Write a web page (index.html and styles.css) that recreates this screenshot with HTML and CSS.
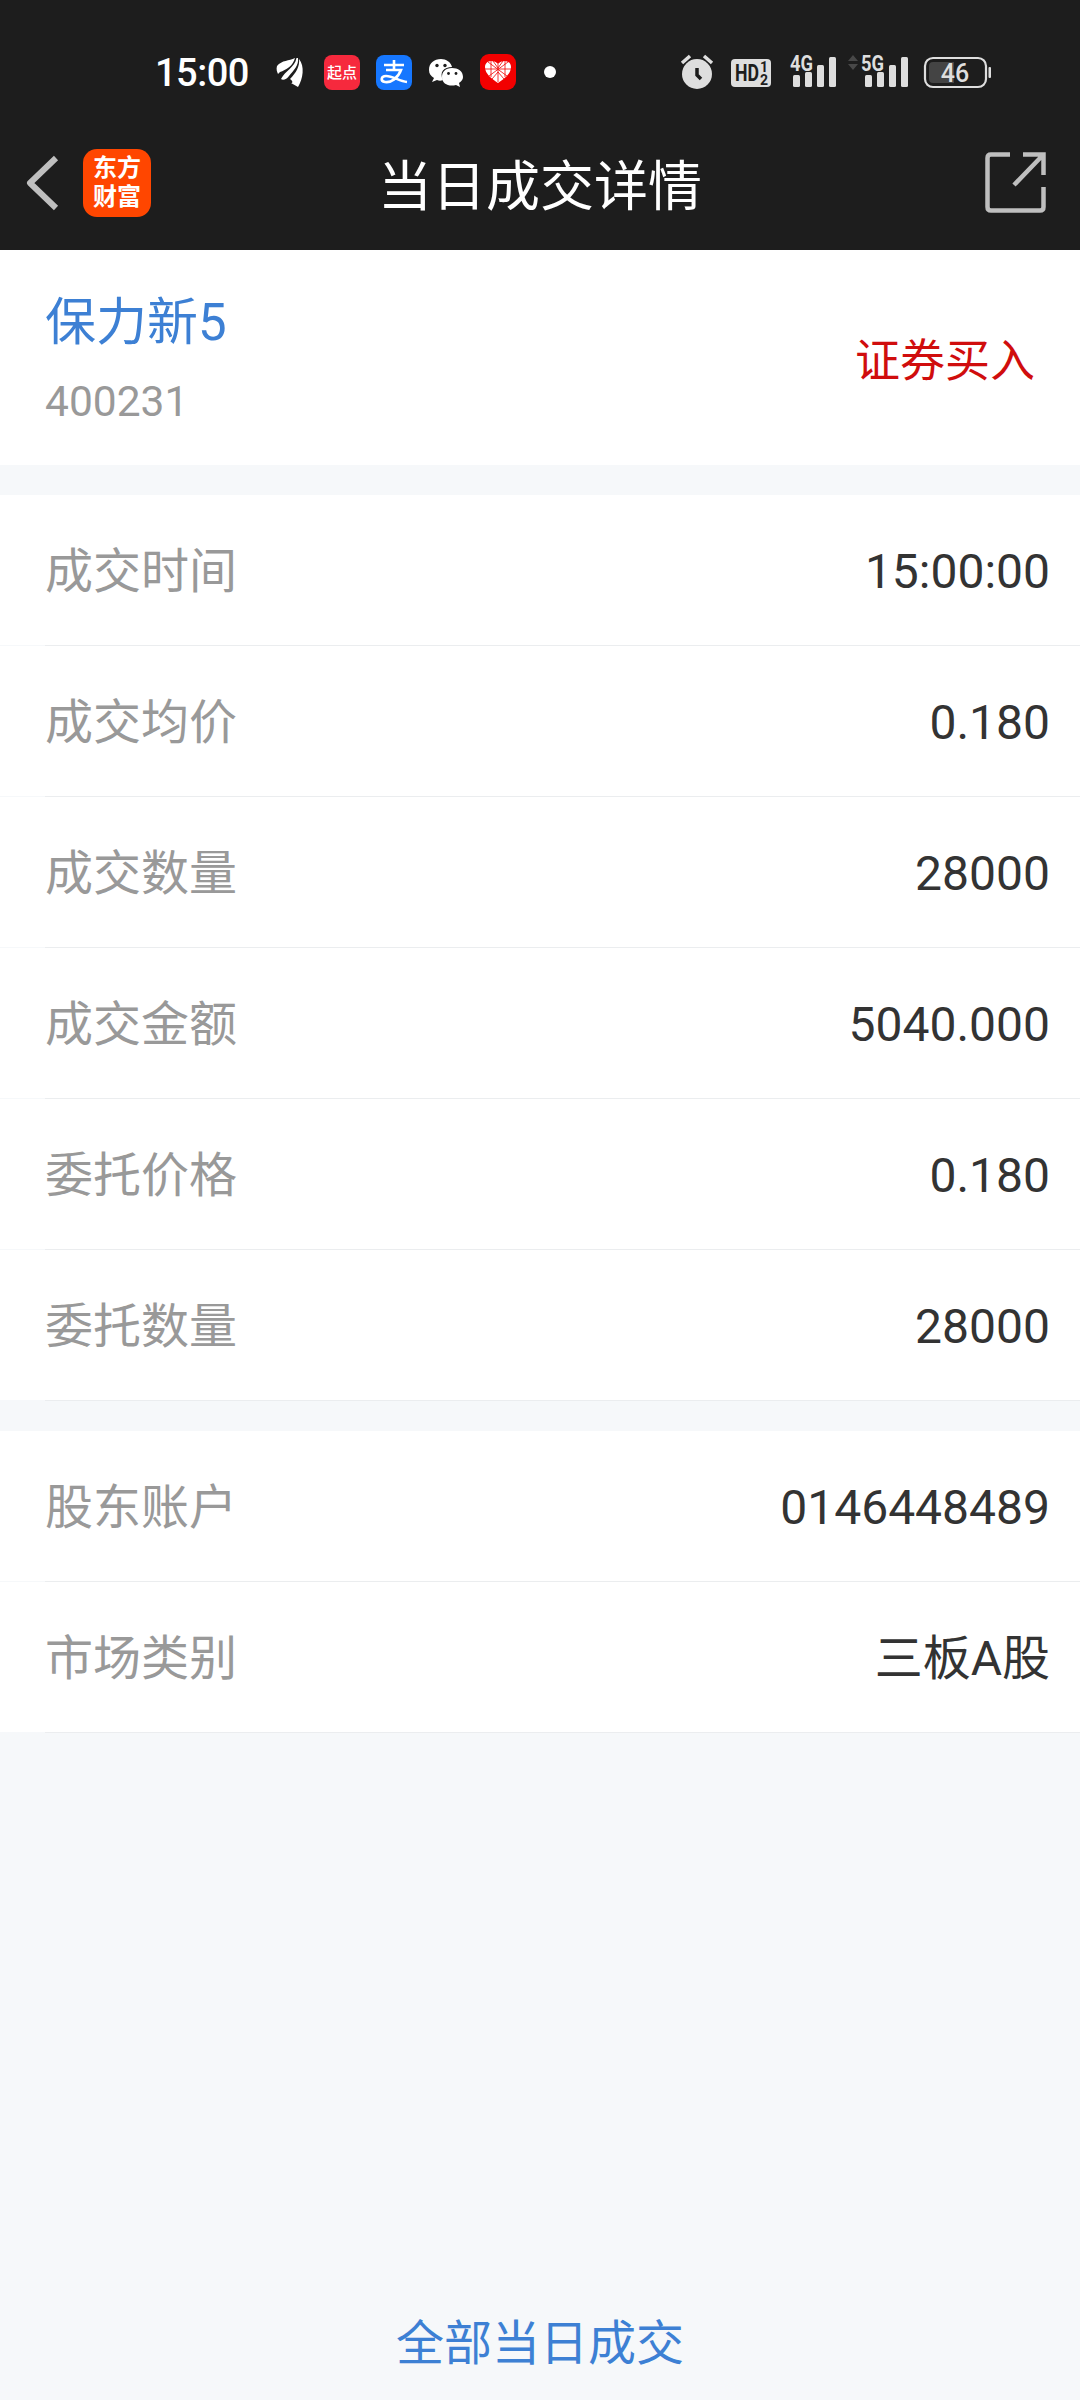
FILE: index.html
```
<!DOCTYPE html>
<html lang="zh-CN">

<head>
  <meta charset="utf-8">
  <title>当日成交详情</title>
  <link rel="stylesheet" href="styles.css">
</head>

<body>
  <header class="header">
    <div class="status">
      <div class="status-left">
        <span class="clock">15:00</span>
        <svg width="36" height="40" viewBox="0 0 36 40">
          <path fill="#fff" d="M5 14C10 8 17 9 23 6C21 14 14 18 8 20L6 22C5 20 4 17 5 14Z" />
          <path fill="#fff" d="M24.500 6C23 15 13 19 9 27C11 29 15 27 17 24C22 18 27 13 26 6Z" />
          <path fill="#fff" d="M27 7C33 14 31 27 26 35L19 31C21 31 21 29 18 27C24 21 28 14 27 7Z" />
        </svg>
        <svg width="36" height="40" viewBox="0 0 36 40">
          <rect y="3" width="36" height="35" rx="8" fill="#f6293d" />
          <text x="18" y="26" class="qidian">起点</text>
        </svg>
        <svg width="36" height="40" viewBox="0 0 36 40">
          <rect y="3" width="36" height="35" rx="8" fill="#1677ff" />
          <g fill="none" stroke="#fff" stroke-width="2.600">
            <path d="M8 13H28M18 8V18M10 18H25C22 26 15 31 9 30C4 29 5 24 10 24C17 24 23 29 31 30" />
          </g>
        </svg>
        <svg width="36" height="40" viewBox="0 0 36 40">
          <path fill="#fff" d="M13 7C6 7 1 11 1 18C1 22 3 24 6 26L4 30L9 28C11 29 13 29 15 28C11 20 16 15 24 15C23 10 18 7 13 7Z" />
          <path fill="#fff" d="M24 16C17 16 14 20 14 25C14 32 21 35 28 33L32 35L31 31C34 29 35 27 35 25C35 19 30 16 24 16Z" />
          <g fill="#1d1d1d">
            <circle cx="9" cy="13.500" r="1.700" />
            <circle cx="17" cy="13.500" r="1.700" />
            <circle cx="20.500" cy="21.500" r="1.400" />
            <circle cx="28" cy="21.500" r="1.400" />
          </g>
        </svg>
        <svg width="36" height="40" viewBox="0 0 36 40">
          <rect y="2" width="36" height="36" rx="9" fill="#f20000" />
          <path fill="#fff" d="M18 12C22 7 31 8 31 15C31 22 24 27 18 31C12 27 5 22 5 15C5 8 14 7 18 12Z" />
          <path fill="none" stroke="#f20000" stroke-width=".8" d="M18 12V30M5 17H31M8 10L27 24M28 10L9 24M11 9V25M25 9V25M13 9L18 16L23 9M12 27L18 20L24 27" />
        </svg>
        <svg width="36" height="40" viewBox="0 0 36 40">
          <circle cx="18" cy="20" r="6" fill="#fff" />
        </svg>
      </div>
      <div class="status-right">
        <svg class="alarm" width="34" height="40" viewBox="0 0 34 40">
          <circle cx="17" cy="22" r="15" fill="#dedede" />
          <path d="M2 11L10 4M32 11L24 4" stroke="#dedede" stroke-width="3.500" />
          <path d="M17 16V23L21 27" fill="none" stroke="#1d1d1d" stroke-width="3.500" />
        </svg>
        <svg class="hd" width="40" height="40" viewBox="0 0 40 40">
          <rect y="7" width="40" height="28" rx="4" fill="#dedede" />
          <text x="4" y="29" class="hd-text" textLength="24" lengthAdjust="spacingAndGlyphs">HD</text>
          <text x="29" y="20" class="hd-num">1</text>
          <text x="29" y="32.500" class="hd-num">2</text>
        </svg>
        <svg class="sim1" width="48" height="40" viewBox="0 0 48 40">
          <g fill="#dedede">
            <rect x="4" y="23" width="7" height="12" rx="1.500" />
            <rect x="16" y="20" width="7" height="15" rx="1.500" />
            <rect x="28" y="13" width="7" height="22" rx="1.500" />
            <rect x="40" y="5" width="7" height="30" rx="1.500" />
          </g>
          <text x="1" y="18.500" class="net" textLength="23" lengthAdjust="spacingAndGlyphs">4G</text>
        </svg>
        <svg class="sim2" width="62" height="40" viewBox="0 0 62 40">
          <path d="M1 9L6 3L11 9ZM1 12H11L6 18Z" fill="#484848" />
          <g fill="#dedede">
            <rect x="18" y="23" width="7" height="12" rx="1.500" />
            <rect x="30" y="20" width="7" height="15" rx="1.500" />
            <rect x="42" y="13" width="7" height="22" rx="1.500" />
            <rect x="54" y="5" width="7" height="30" rx="1.500" />
          </g>
          <text x="14" y="18.500" class="net" textLength="23" lengthAdjust="spacingAndGlyphs">5G</text>
        </svg>
        <svg width="70" height="40" viewBox="0 0 70 40">
          <rect x="2" y="6" width="61" height="29" rx="8" fill="none" stroke="#dedede" stroke-width="2.200" />
          <path d="M10 10H31V31H10Q6 31 6 27V14Q6 10 10 10Z" fill="#444" />
          <rect x="65.500" y="15" width="2.500" height="11" rx="1" fill="#dedede" />
          <text x="32" y="29.500" class="battery-text">46</text>
        </svg>
      </div>
    </div>
    <nav class="navbar">
      <div class="nav-left">
        <svg width="34" height="56" viewBox="0 0 34 56">
          <path d="M30 3L4 28L30 53" fill="none" stroke="#bfbfbf" stroke-width="6" stroke-linejoin="round" />
        </svg>
        <div class="logo">东方<br>财富</div>
      </div>
      <h1 class="title">当日成交详情</h1>
      <svg width="62" height="62" viewBox="0 0 62 62">
        <path d="M25 2.500H6Q2.500 2.500 2.500 6V55Q2.500 58.500 6 58.500H55Q58.500 58.500 58.500 55V35" fill="none" stroke="#bfbfbf" stroke-width="4.500" />
        <path d="M38 2.500H58.500V23M57 4L29 33" fill="none" stroke="#bfbfbf" stroke-width="4.500" />
      </svg>
    </nav>
  </header>

  <section class="stock">
    <div>
      <div class="stock-name">保力新5</div>
      <div class="stock-code">400231</div>
    </div>
    <div class="side">证券买入</div>
  </section>

  <section class="list">
    <div class="row"><span class="label">成交时间</span><span class="value">15:00:00</span></div>
    <div class="row"><span class="label">成交均价</span><span class="value">0.180</span></div>
    <div class="row"><span class="label">成交数量</span><span class="value">28000</span></div>
    <div class="row"><span class="label">成交金额</span><span class="value">5040.000</span></div>
    <div class="row"><span class="label">委托价格</span><span class="value">0.180</span></div>
    <div class="row"><span class="label">委托数量</span><span class="value">28000</span></div>
  </section>

  <section class="list">
    <div class="row"><span class="label">股东账户</span><span class="value">0146448489</span></div>
    <div class="row"><span class="label">市场类别</span><span class="value">三板A股</span></div>
  </section>

  <a class="all-link">全部当日成交</a>
</body>

</html>
```
FILE: styles.css
```
* {
  box-sizing: border-box;
}

body {
  margin: 0;
  width: 1080px;
  height: 2400px;
  display: flex;
  flex-direction: column;
  background: #f6f8fa;
  font-family: Roboto, "Noto Sans CJK SC", sans-serif;
  color: #333;
}

svg {
  display: block;
  flex: none;
}

.header {
  height: 250px;
  background: #1d1d1d;
}

/* status bar */
.status {
  height: 115px;
  padding: 52px 87px 0 155px;
  display: flex;
  justify-content: space-between;
}

.status-left {
  display: flex;
  gap: 16px;
}

.clock {
  width: 101px;
  color: #fff;
  font-size: 38px;
  font-weight: 500;
  letter-spacing: -0.5px;
  line-height: 43px;
}

.status-right {
  display: flex;
}

.alarm {
  margin-right: 17px;
}

.hd {
  margin-right: 18px;
}

.sim1 {
  margin-right: 10px;
}

.sim2 {
  margin-right: 14px;
}

.qidian {
  font-size: 15px;
  font-weight: 500;
  fill: #fff;
  text-anchor: middle;
}

.hd-text {
  font-size: 23px;
  font-weight: 700;
  fill: #1d1d1d;
}

.hd-num {
  font-size: 14px;
  font-weight: 700;
  fill: #1d1d1d;
}

.net {
  font-size: 22px;
  font-weight: 700;
  fill: #dedede;
  stroke: #1d1d1d;
  stroke-width: 1px;
  paint-order: stroke;
}

.battery-text {
  font-size: 25px;
  font-weight: 500;
  fill: #dedede;
  text-anchor: middle;
}

/* nav bar */
.navbar {
  height: 135px;
  padding: 0 33px 0 26px;
  display: grid;
  grid-template-columns: 352px 1fr 62px;
  align-items: center;
}

.nav-left {
  display: flex;
  align-items: center;
  gap: 23px;
}

.logo {
  width: 68px;
  height: 68px;
  padding-top: 5px;
  border-radius: 14px;
  background: #ff4600;
  color: #fff;
  font-size: 24px;
  font-weight: 700;
  line-height: 29px;
  text-align: center;
}

.title {
  margin: 0;
  padding-top: 10px;
  color: #fff;
  font-size: 54px;
  font-weight: 400;
  line-height: 64px;
  white-space: nowrap;
}

/* stock summary */
.stock {
  height: 215px;
  padding: 9px 45px 0;
  display: flex;
  justify-content: space-between;
  align-items: center;
  background: #fff;
}

.stock-name {
  color: #3d80d4;
  font-size: 51px;
  line-height: 80px;
}

.stock-code {
  color: #999;
  font-size: 42.5px;
  line-height: 78px;
}

.side {
  color: #d00d0d;
  font-size: 45px;
  line-height: 62px;
}

/* detail rows */
.list {
  margin-top: 30px;
}

.row {
  height: 151px;
  padding: 3px 30px 0 45px;
  display: flex;
  justify-content: space-between;
  align-items: center;
  font-size: 48px;
  line-height: 70px;
  background: linear-gradient(#ebedef, #ebedef) 45px 150px no-repeat, linear-gradient(#fff, #fff) 0 0 / 100% 150px no-repeat;
}

.label {
  color: #999;
}

.all-link {
  margin-top: auto;
  padding-bottom: 21px;
  color: #3d80d4;
  font-size: 48px;
  line-height: 70px;
  text-align: center;
}
```
